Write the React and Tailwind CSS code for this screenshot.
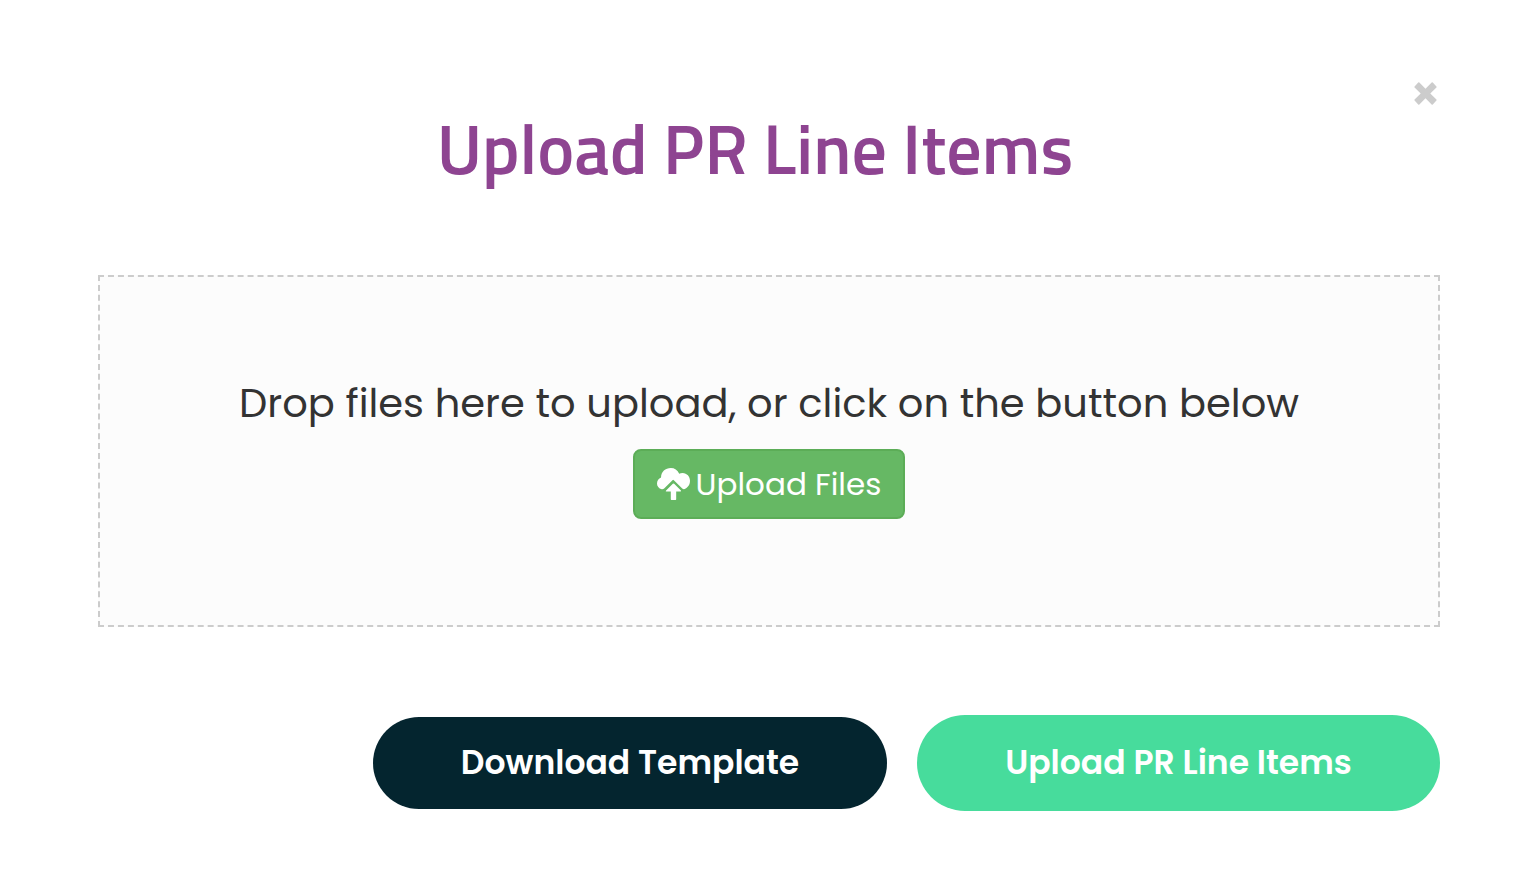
import React from 'react';

function CloseIcon() {
  return (
    <svg viewBox="0 0 24 24" className="h-[23px] w-[23px]" fill="currentColor" aria-hidden="true">
      <path d="M5.6 0.6 L12 7 L18.4 0.6 Q19 0 19.6 0.6 L23.4 4.6 Q24 5.2 23.4 5.8 L17 12 L23.4 18.2 Q24 18.8 23.4 19.4 L19.6 23.4 Q19 24 18.4 23.4 L12 17 L5.6 23.4 Q5 24 4.4 23.4 L0.6 19.4 Q0 18.8 0.6 18.2 L7 12 L0.6 5.8 Q0 5.2 0.6 4.6 L4.4 0.6 Q5 0 5.6 0.6 Z" />
    </svg>
  );
}

function CloudUploadIcon() {
  return (
    <svg viewBox="0 0 98 95" className="h-8 w-[33px] shrink-0" fill="currentColor" aria-hidden="true">
      <path d="M14 63 C5 61 0 54 0 46 C0 37 5 31 12 28 C12 11 25 0 41 0 C52 0 61 6 66 17 C69 16 72 15 76 15 C89 15 98 26 98 38 C98 50 91 60 80 63 Q77 63 75 61 L50 36 Q48 34 46 36 L22 60 Q18 64 14 63 Z" />
      <path d="M47 47 Q49 45 51 47 L71 67 Q73 70 69 70 L57 70 L57 93 Q57 95 55 95 L43 95 Q41 95 41 93 L41 70 L28 70 Q24 70 27 67 Z" />
    </svg>
  );
}

export default function App() {
  return (
    <main className="min-h-screen bg-white pt-20 pr-[92px] pb-16 pl-[98px] font-['Poppins','Inter',sans-serif] text-[#333333]">
      <header className="flex items-start">
        <h1 className="flex-1 pt-7 text-center font-['Titillium_Web','Roboto',sans-serif] text-[70px] leading-[80px] font-semibold text-[#8e4491]">
          Upload PR Line Items
        </h1>
        <button type="button" aria-label="Close" className="flex w-7 pt-0.5 pl-0.5 text-[#cccccc]">
          <CloseIcon />
        </button>
      </header>

      <section className="mt-[87px] flex flex-col items-center border-2 border-dashed border-[#cccccc] bg-[#fcfcfc] pt-24 pb-[106px]">
        <p className="text-center text-[40px] leading-[60px]">
          Drop files here to upload, or click on the button below
        </p>
        <button
          type="button"
          className="mt-4 flex h-[70px] w-[272px] items-center justify-center gap-1.5 rounded-lg border-2 border-[#5cad57] bg-[#66b864] text-[31px] text-white"
        >
          <CloudUploadIcon />
          Upload Files
        </button>
      </section>

      <footer className="mt-[88px] flex items-center justify-end gap-[30px] text-[33px] font-semibold text-white">
        <button type="button" className="h-[92px] w-[514px] rounded-full bg-[#04252f]">
          Download Template
        </button>
        <button type="button" className="h-24 w-[523px] rounded-full bg-[#47dc9c]">
          Upload PR Line Items
        </button>
      </footer>
    </main>
  );
}
